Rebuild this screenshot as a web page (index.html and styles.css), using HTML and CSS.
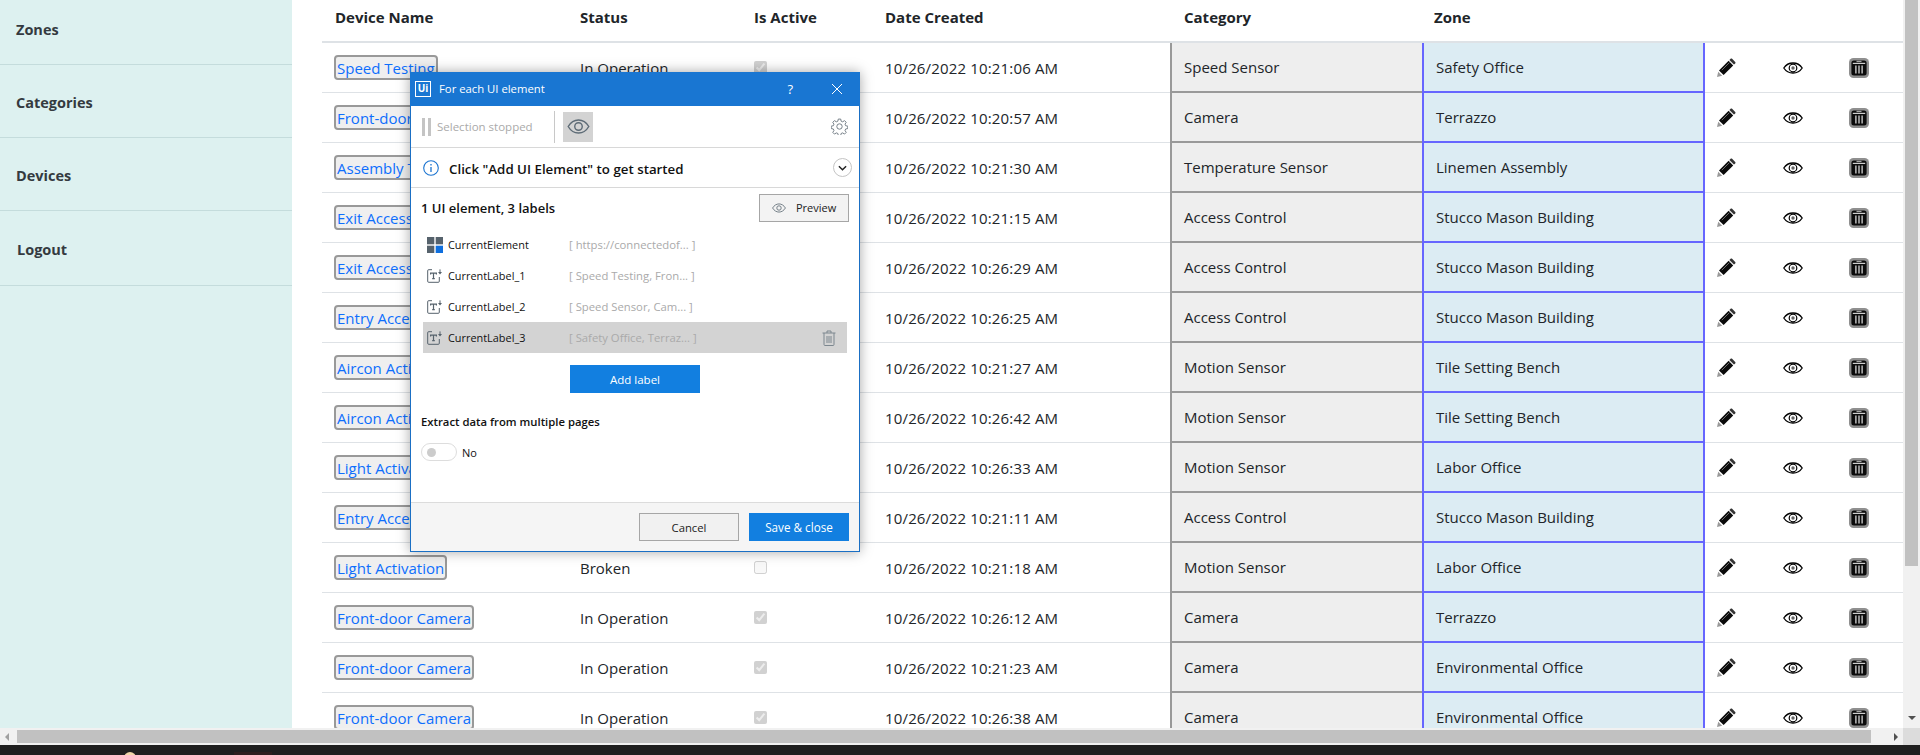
FILE: index.html
```html
<!DOCTYPE html>
<html lang="en">

<head>
    <meta charset="UTF-8">
    <title>Devices</title>
    <link rel="stylesheet" href="styles.css">
</head>

<body>
    <svg class="sprites" width="0" height="0">
        <symbol id="pencil" viewBox="0 0 20 20">
            <path d="M1 19l1.200-5.200 4 4z" fill="#9a9a9a"/>
            <path d="M3 12.400L12.600 2.800l4.600 4.600L7.600 17z" fill="#0a0a0a"/>
            <path d="M5.800 12.200l7.600-7.600" stroke="#8a8a8a" stroke-width=".8"/>
            <path d="M13.400 2l1.200-1.200c.5-.5 1-.5 1.500 0l3.100 3.100c.5.500.5 1 0 1.500L18 6.600z" fill="#333"/>
            <path d="M13.600 2.800l3.600 3.600" stroke="#ccc" stroke-width=".7"/>
        </symbol>
        <symbol id="eye" viewBox="0 0 20 12">
            <path d="M.8 6C3 2.600 6.400 1 10 1s7 1.600 9.200 5C17 9.400 13.600 11 10 11S3 9.400.8 6z" fill="none" stroke="#000" stroke-width="1.300"/>
            <circle cx="10" cy="6" r="3.800" fill="none" stroke="#000" stroke-width="1.200"/>
            <circle cx="10" cy="6" r="1.700" fill="#666"/>
        </symbol>
        <symbol id="trash" viewBox="0 0 20 20">
            <rect width="20" height="20" rx="4.500" fill="#8f8f8f"/>
            <rect x="2.400" y="2.400" width="15.200" height="15.200" rx="2.500" fill="#0c0c0c"/>
            <rect x="7.500" y="2.800" width="5" height="1.300" fill="#a8a8a8"/>
            <rect x="3.800" y="4.800" width="12.400" height="1.200" fill="#cfcfcf"/>
            <path d="M6.900 7.500v8M10 7.500v8M13.100 7.500v8" stroke="#e6e6e6" stroke-width="1.200"/>
        </symbol>
        <symbol id="label-icon" viewBox="0 0 16 14">
            <path d="M5 .7H1.800A1 1 0 0 0 .7 1.800v10.400a1 1 0 0 0 1.100 1.100h9.400a1 1 0 0 0 1.100-1.100V8" fill="none" stroke="#56626c" stroke-width="1"/>
            <path d="M3.600 5.600V4.200h5.800v1.400M6.500 4.200v5.400M5.200 9.600h2.600" fill="none" stroke="#56626c" stroke-width="1.200"/>
            <path d="M13 .4v4" stroke="#56626c" stroke-width="1"/>
            <path d="M11 3l2 2.400L15 3z" fill="#56626c"/>
        </symbol>
    </svg>

    <div class="screen">
        <aside class="sidebar">
            <nav class="side-nav">
                <a class="side-item">Zones</a>
                <a class="side-item">Categories</a>
                <a class="side-item">Devices</a>
                <a class="side-item side-logout">Logout</a>
            </nav>
        </aside>

        <main class="content">
            <table class="device-table">
                <colgroup>
                    <col class="c-name">
                    <col class="c-status">
                    <col class="c-active">
                    <col class="c-date">
                    <col class="c-cat">
                    <col class="c-zone">
                    <col class="c-act">
                    <col class="c-act">
                    <col class="c-act-last">
                </colgroup>
                <thead>
                    <tr>
                        <th>Device Name</th>
                        <th>Status</th>
                        <th>Is Active</th>
                        <th>Date Created</th>
                        <th>Category</th>
                        <th>Zone</th>
                        <th></th>
                        <th></th>
                        <th></th>
                    </tr>
                </thead>
                <tbody>
                    <tr>
                        <td><a class="device-btn">Speed Testing</a></td>
                        <td>In Operation</td>
                        <td><input type="checkbox" checked disabled></td>
                        <td class="date">10/26/2022 10:21:06 AM</td>
                        <td class="cat">Speed Sensor</td>
                        <td class="zone">Safety Office</td>
                        <td class="act"><svg class="i-pencil"><use href="#pencil"/></svg></td>
                        <td class="act"><svg class="i-eye"><use href="#eye"/></svg></td>
                        <td class="act"><svg class="i-trash"><use href="#trash"/></svg></td>
                    </tr>
                    <tr>
                        <td><a class="device-btn">Front-door Camera</a></td>
                        <td>In Operation</td>
                        <td><input type="checkbox" checked disabled></td>
                        <td class="date">10/26/2022 10:20:57 AM</td>
                        <td class="cat">Camera</td>
                        <td class="zone">Terrazzo</td>
                        <td class="act"><svg class="i-pencil"><use href="#pencil"/></svg></td>
                        <td class="act"><svg class="i-eye"><use href="#eye"/></svg></td>
                        <td class="act"><svg class="i-trash"><use href="#trash"/></svg></td>
                    </tr>
                    <tr>
                        <td><a class="device-btn">Assembly Testing</a></td>
                        <td>In Operation</td>
                        <td><input type="checkbox" checked disabled></td>
                        <td class="date">10/26/2022 10:21:30 AM</td>
                        <td class="cat">Temperature Sensor</td>
                        <td class="zone">Linemen Assembly</td>
                        <td class="act"><svg class="i-pencil"><use href="#pencil"/></svg></td>
                        <td class="act"><svg class="i-eye"><use href="#eye"/></svg></td>
                        <td class="act"><svg class="i-trash"><use href="#trash"/></svg></td>
                    </tr>
                    <tr>
                        <td><a class="device-btn">Exit Access</a></td>
                        <td>In Operation</td>
                        <td><input type="checkbox" checked disabled></td>
                        <td class="date">10/26/2022 10:21:15 AM</td>
                        <td class="cat">Access Control</td>
                        <td class="zone">Stucco Mason Building</td>
                        <td class="act"><svg class="i-pencil"><use href="#pencil"/></svg></td>
                        <td class="act"><svg class="i-eye"><use href="#eye"/></svg></td>
                        <td class="act"><svg class="i-trash"><use href="#trash"/></svg></td>
                    </tr>
                    <tr>
                        <td><a class="device-btn">Exit Access</a></td>
                        <td>In Operation</td>
                        <td><input type="checkbox" checked disabled></td>
                        <td class="date">10/26/2022 10:26:29 AM</td>
                        <td class="cat">Access Control</td>
                        <td class="zone">Stucco Mason Building</td>
                        <td class="act"><svg class="i-pencil"><use href="#pencil"/></svg></td>
                        <td class="act"><svg class="i-eye"><use href="#eye"/></svg></td>
                        <td class="act"><svg class="i-trash"><use href="#trash"/></svg></td>
                    </tr>
                    <tr>
                        <td><a class="device-btn">Entry Access</a></td>
                        <td>In Operation</td>
                        <td><input type="checkbox" checked disabled></td>
                        <td class="date">10/26/2022 10:26:25 AM</td>
                        <td class="cat">Access Control</td>
                        <td class="zone">Stucco Mason Building</td>
                        <td class="act"><svg class="i-pencil"><use href="#pencil"/></svg></td>
                        <td class="act"><svg class="i-eye"><use href="#eye"/></svg></td>
                        <td class="act"><svg class="i-trash"><use href="#trash"/></svg></td>
                    </tr>
                    <tr>
                        <td><a class="device-btn">Aircon Activation</a></td>
                        <td>In Operation</td>
                        <td><input type="checkbox" checked disabled></td>
                        <td class="date">10/26/2022 10:21:27 AM</td>
                        <td class="cat">Motion Sensor</td>
                        <td class="zone">Tile Setting Bench</td>
                        <td class="act"><svg class="i-pencil"><use href="#pencil"/></svg></td>
                        <td class="act"><svg class="i-eye"><use href="#eye"/></svg></td>
                        <td class="act"><svg class="i-trash"><use href="#trash"/></svg></td>
                    </tr>
                    <tr>
                        <td><a class="device-btn">Aircon Activation</a></td>
                        <td>In Operation</td>
                        <td><input type="checkbox" checked disabled></td>
                        <td class="date">10/26/2022 10:26:42 AM</td>
                        <td class="cat">Motion Sensor</td>
                        <td class="zone">Tile Setting Bench</td>
                        <td class="act"><svg class="i-pencil"><use href="#pencil"/></svg></td>
                        <td class="act"><svg class="i-eye"><use href="#eye"/></svg></td>
                        <td class="act"><svg class="i-trash"><use href="#trash"/></svg></td>
                    </tr>
                    <tr>
                        <td><a class="device-btn">Light Activation</a></td>
                        <td>In Operation</td>
                        <td><input type="checkbox" checked disabled></td>
                        <td class="date">10/26/2022 10:26:33 AM</td>
                        <td class="cat">Motion Sensor</td>
                        <td class="zone">Labor Office</td>
                        <td class="act"><svg class="i-pencil"><use href="#pencil"/></svg></td>
                        <td class="act"><svg class="i-eye"><use href="#eye"/></svg></td>
                        <td class="act"><svg class="i-trash"><use href="#trash"/></svg></td>
                    </tr>
                    <tr>
                        <td><a class="device-btn">Entry Access</a></td>
                        <td>In Operation</td>
                        <td><input type="checkbox" checked disabled></td>
                        <td class="date">10/26/2022 10:21:11 AM</td>
                        <td class="cat">Access Control</td>
                        <td class="zone">Stucco Mason Building</td>
                        <td class="act"><svg class="i-pencil"><use href="#pencil"/></svg></td>
                        <td class="act"><svg class="i-eye"><use href="#eye"/></svg></td>
                        <td class="act"><svg class="i-trash"><use href="#trash"/></svg></td>
                    </tr>
                    <tr>
                        <td><a class="device-btn">Light Activation</a></td>
                        <td>Broken</td>
                        <td><input type="checkbox" disabled></td>
                        <td class="date">10/26/2022 10:21:18 AM</td>
                        <td class="cat">Motion Sensor</td>
                        <td class="zone">Labor Office</td>
                        <td class="act"><svg class="i-pencil"><use href="#pencil"/></svg></td>
                        <td class="act"><svg class="i-eye"><use href="#eye"/></svg></td>
                        <td class="act"><svg class="i-trash"><use href="#trash"/></svg></td>
                    </tr>
                    <tr>
                        <td><a class="device-btn">Front-door Camera</a></td>
                        <td>In Operation</td>
                        <td><input type="checkbox" checked disabled></td>
                        <td class="date">10/26/2022 10:26:12 AM</td>
                        <td class="cat">Camera</td>
                        <td class="zone">Terrazzo</td>
                        <td class="act"><svg class="i-pencil"><use href="#pencil"/></svg></td>
                        <td class="act"><svg class="i-eye"><use href="#eye"/></svg></td>
                        <td class="act"><svg class="i-trash"><use href="#trash"/></svg></td>
                    </tr>
                    <tr>
                        <td><a class="device-btn">Front-door Camera</a></td>
                        <td>In Operation</td>
                        <td><input type="checkbox" checked disabled></td>
                        <td class="date">10/26/2022 10:21:23 AM</td>
                        <td class="cat">Camera</td>
                        <td class="zone">Environmental Office</td>
                        <td class="act"><svg class="i-pencil"><use href="#pencil"/></svg></td>
                        <td class="act"><svg class="i-eye"><use href="#eye"/></svg></td>
                        <td class="act"><svg class="i-trash"><use href="#trash"/></svg></td>
                    </tr>
                    <tr>
                        <td><a class="device-btn">Front-door Camera</a></td>
                        <td>In Operation</td>
                        <td><input type="checkbox" checked disabled></td>
                        <td class="date">10/26/2022 10:26:38 AM</td>
                        <td class="cat">Camera</td>
                        <td class="zone">Environmental Office</td>
                        <td class="act"><svg class="i-pencil"><use href="#pencil"/></svg></td>
                        <td class="act"><svg class="i-eye"><use href="#eye"/></svg></td>
                        <td class="act"><svg class="i-trash"><use href="#trash"/></svg></td>
                    </tr>
                </tbody>
            </table>
        </main>

        <div class="v-scroll">
            <div class="v-thumb"></div>
            <div class="arrow-down"></div>
        </div>
    </div>

    <div class="h-scroll">
        <div class="h-end"><span class="arrow-left"></span></div>
        <div class="h-thumb"></div>
        <div class="h-end h-end-right"><span class="arrow-right"></span></div>
        <div class="h-corner"></div>
    </div>

    <div class="taskbar">
        <span class="task-avatar"></span>
        <span class="task-app"></span>
    </div>

    <!-- UiPath dialog over the page -->
    <section class="dialog">
        <header class="dlg-title">
            <span class="dlg-logo">Ui</span>
            <span class="dlg-title-text">For each UI element</span>
            <span class="dlg-help">?</span>
            <svg class="dlg-close" viewBox="0 0 12 12"><path d="M1 1l10 10M11 1L1 11" stroke="#fff" stroke-width="1"/></svg>
        </header>

        <div class="dlg-toolbar">
            <span class="pause-bars"></span>
            <span class="sel-text">Selection stopped</span>
            <span class="tool-sep"></span>
            <span class="eye-toggle">
                <svg viewBox="0 0 24 16" width="23" height="15"><path d="M1 8c2.600-4.400 6.600-7 11-7s8.400 2.600 11 7c-2.600 4.400-6.600 7-11 7S3.600 12.400 1 8z" fill="none" stroke="#5d6b76" stroke-width="1.500"/><circle cx="12" cy="8" r="4" fill="none" stroke="#5d6b76" stroke-width="1.500"/></svg>
            </span>
            <svg class="gear" viewBox="0 0 24 24" width="17" height="17"><path d="M10.300 1.500h3.400l.6 3 2.200.9 2.600-1.700 2.400 2.400-1.700 2.600.9 2.200 3 .6v3.400l-3 .6-.9 2.200 1.700 2.600-2.400 2.400-2.600-1.700-2.200.9-.6 3h-3.400l-.6-3-2.200-.9-2.600 1.700-2.400-2.400 1.700-2.600-.9-2.200-3-.6v-3.400l3-.6.9-2.200L2.500 6.100l2.400-2.400 2.600 1.700 2.200-.9z" fill="none" stroke="#6c7780" stroke-width="1.300"/><circle cx="12" cy="12" r="3.800" fill="none" stroke="#6c7780" stroke-width="1.300"/></svg>
        </div>

        <div class="dlg-info">
            <svg viewBox="0 0 16 16" width="16" height="16"><circle cx="8" cy="8" r="7.300" fill="none" stroke="#1a73d0" stroke-width="1.100"/><path d="M8 7v5M8 4v1.500" stroke="#1a73d0" stroke-width="1.300"/></svg>
            <span class="info-text">Click "Add UI Element" to get started</span>
            <span class="chev-circle">
                <svg viewBox="0 0 10 6" width="9" height="6"><path d="M1 1l4 4 4-4" fill="none" stroke="#222" stroke-width="1.600"/></svg>
            </span>
        </div>

        <div class="dlg-body">
            <div class="count-row">
                <span class="count-text">1 UI element, 3 labels</span>
                <button class="btn-preview">
                    <svg viewBox="0 0 24 16" width="14" height="10"><path d="M1 8c2.600-4.400 6.600-7 11-7s8.400 2.600 11 7c-2.600 4.400-6.600 7-11 7S3.600 12.400 1 8z" fill="none" stroke="#6c7780" stroke-width="1.600"/><circle cx="12" cy="8" r="3.800" fill="none" stroke="#6c7780" stroke-width="1.600"/></svg>
                    Preview
                </button>
            </div>

            <ul class="var-list">
                <li class="var-row">
                    <svg class="var-icon" viewBox="0 0 16 16"><rect width="7.300" height="7.300" fill="#56626c"/><rect x="8.700" width="7.300" height="7.300" fill="#56626c"/><rect y="8.700" width="7.300" height="7.300" fill="#56626c"/><rect x="8.700" y="8.700" width="7.300" height="7.300" fill="#0f6fde"/></svg>
                    <span class="var-name">CurrentElement</span>
                    <span class="var-val">[ https://connectedof... ]</span>
                </li>
                <li class="var-row">
                    <svg class="var-icon"><use href="#label-icon"/></svg>
                    <span class="var-name">CurrentLabel_1</span>
                    <span class="var-val">[ Speed Testing, Fron... ]</span>
                </li>
                <li class="var-row">
                    <svg class="var-icon"><use href="#label-icon"/></svg>
                    <span class="var-name">CurrentLabel_2</span>
                    <span class="var-val">[ Speed Sensor, Cam... ]</span>
                </li>
                <li class="var-row var-selected">
                    <svg class="var-icon"><use href="#label-icon"/></svg>
                    <span class="var-name">CurrentLabel_3</span>
                    <span class="var-val">[ Safety Office, Terraz... ]</span>
                    <svg class="var-del" viewBox="0 0 14 16" width="14" height="16"><path d="M.5 3h13M5 3V1h4v2M2 3v11.500a1 1 0 0 0 1 1h8a1 1 0 0 0 1-1V3M5 6v7M7 6v7M9 6v7" fill="none" stroke="#7c878f" stroke-width="1"/></svg>
                </li>
            </ul>

            <button class="btn-add">Add label</button>

            <div class="extract-title">Extract data from multiple pages</div>
            <div class="toggle-row">
                <span class="toggle"><span class="toggle-dot"></span></span>
                <span>No</span>
            </div>
        </div>

        <footer class="dlg-footer">
            <button class="btn-cancel">Cancel</button>
            <button class="btn-save">Save &amp; close</button>
        </footer>
    </section>
</body>

</html>
```
FILE: styles.css
```css
* {
    box-sizing: border-box;
}

html, body {
    margin: 0;
    height: 755px;
    overflow: hidden;
}

body {
    font-family: "Open Sans", "Noto Sans", Arial, sans-serif;
    color: #212529;
    background: #fff;
    position: relative;
}

.sprites {
    position: absolute;
}

.screen {
    display: flex;
    height: 728px;
    overflow: hidden;
}

/* sidebar */
.sidebar {
    width: 292px;
    flex: none;
    background: #ddf1f0;
    overflow: hidden;
}

.side-nav {
    margin-top: -8px;
}

.side-item {
    display: flex;
    align-items: center;
    height: 73px;
    padding: 3px 0 0 16px;
    border-bottom: 1px solid #c4dcdc;
    font-size: 14.5px;
    font-weight: 700;
    color: #343a40;
}

.side-logout {
    height: 75px;
    padding-left: 17px;
}

/* table */
.content {
    flex: 1;
    padding-left: 30px;
    overflow: hidden;
}

.device-table {
    width: 1581px;
    table-layout: fixed;
    border-collapse: separate;
    border-spacing: 0;
    font-size: 15px;
}

.c-name { width: 245px; }
.c-status { width: 174px; }
.c-active { width: 131px; }
.c-date { width: 298px; }
.c-cat { width: 252px; }
.c-zone { width: 283px; }
.c-act { width: 66px; }
.c-act-last { width: 66px; }

.device-table th {
    height: 43px;
    padding: 0 0 7px 13px;
    text-align: left;
    font-weight: 700;
    border-bottom: 2px solid #dee2e6;
}

.device-table th:nth-child(5) {
    padding-left: 14px;
}

.device-table th:nth-child(6) {
    padding-left: 12px;
}

.device-table td {
    height: 50px;
    padding: 0 0 0 13px;
    border-bottom: 1px solid #dee2e6;
    vertical-align: middle;
}

.device-table td input {
    display: block;
    margin: 0;
}

.device-table td.date {
    letter-spacing: 0.16px;
}

.device-btn {
    display: inline-block;
    height: 25px;
    padding: 0 1px;
    margin: 0 0 1px -1px;
    vertical-align: middle;
    line-height: 22px;
    border: 2px solid #999;
    border-radius: 4px;
    background: #efefef;
    color: #0d6efd;
    white-space: nowrap;
}

.device-table td.cat {
    background: #eee;
    border-left: 2px solid #999;
    border-bottom: 2px solid #999;
    padding-left: 12px;
}

.device-table td.zone {
    background: #dcecf3;
    border-left: 2px solid #66f;
    border-right: 2px solid #66f;
    border-bottom: 2px solid #66f;
    padding-left: 12px;
}

.device-table td.act {
    padding-left: 12px;
}

.device-table td.act:nth-child(7) {
    padding-left: 11px;
}

.act svg {
    display: block;
}

.i-pencil {
    width: 20px;
    height: 20px;
}

.i-eye {
    width: 20px;
    height: 12px;
}

.i-trash {
    width: 20px;
    height: 20px;
}

/* fake scrollbars */
.v-scroll {
    width: 17px;
    flex: none;
    background: #f1f1f1;
    position: relative;
}

.v-thumb {
    width: 13px;
    height: 566px;
    margin-left: 2px;
    background: #c1c1c1;
}

.arrow-down {
    position: absolute;
    left: 5px;
    bottom: 8px;
    border-left: 4px solid transparent;
    border-right: 4px solid transparent;
    border-top: 4px solid #505050;
}

.h-scroll {
    display: flex;
    height: 17px;
    background: #f1f1f1;
}

.h-end {
    width: 17px;
    flex: none;
    display: flex;
    align-items: center;
    padding-left: 5px;
}

.h-end-right {
    width: 32px;
    padding-left: 23px;
}

.arrow-left {
    border-top: 4px solid transparent;
    border-bottom: 4px solid transparent;
    border-right: 4px solid #a0a0a0;
}

.arrow-right {
    border-top: 4px solid transparent;
    border-bottom: 4px solid transparent;
    border-left: 4px solid #505050;
}

.h-thumb {
    flex: 1;
    height: 13px;
    margin-top: 2px;
    background: #c1c1c1;
}

.h-corner {
    width: 17px;
    flex: none;
    background: #dcdcdc;
}

.taskbar {
    display: flex;
    height: 10px;
    gap: 98px;
    padding-left: 124px;
    background: #1f1f1f;
    overflow: hidden;
}

.task-avatar {
    width: 12px;
    height: 12px;
    margin-top: 7px;
    border-radius: 50%;
    background: #f0d6a8;
}

.task-app {
    width: 38px;
    height: 8px;
    margin-top: 7px;
    background: #2e1f1f;
}

/* dialog */
.dialog {
    position: absolute;
    left: 410px;
    top: 72px;
    width: 450px;
    height: 480px;
    display: flex;
    flex-direction: column;
    background: #fff;
    border: 1px solid #1a6fc4;
    box-shadow: 0 0 12px rgba(0, 0, 0, 0.35);
    font-size: 11px;
    color: #111;
}

.dlg-title {
    display: flex;
    align-items: center;
    height: 34px;
    flex: none;
    margin: -1px -1px 0;
    padding: 0 17px 0 5px;
    background: #1976d2;
    color: #fff;
}

.dlg-logo {
    width: 16px;
    height: 16px;
    border: 1.5px solid #fff;
    font-size: 10px;
    font-weight: 700;
    line-height: 13px;
    text-align: center;
    flex: none;
}

.dlg-title-text {
    margin-left: 8px;
    flex: 1;
    font-size: 11.3px;
    margin-top: -1px;
}

.dlg-help {
    font-size: 13px;
    margin-right: 38px;
}

.dlg-close {
    width: 12px;
    height: 12px;
}

.dlg-toolbar {
    display: flex;
    align-items: center;
    height: 42px;
    flex: none;
    padding: 0 11px;
    border-bottom: 1px solid #d8d8d8;
}

.pause-bars {
    width: 9px;
    height: 18px;
    border-left: 3px solid #c4c4c4;
    border-right: 3px solid #c4c4c4;
}

.sel-text {
    margin-left: 6px;
    width: 117px;
    color: #aaa;
    font-size: 11.5px;
}

.tool-sep {
    width: 1px;
    height: 32px;
    background: #c8c8c8;
}

.eye-toggle {
    display: flex;
    align-items: center;
    justify-content: center;
    width: 30px;
    height: 30px;
    margin-left: 8px;
    background: #d3d3d3;
}

.gear {
    margin-left: auto;
}

.dlg-info {
    display: flex;
    align-items: center;
    height: 40px;
    flex: none;
    padding: 0 7px 0 12px;
    border-bottom: 1px solid #d8d8d8;
}

.info-text {
    flex: 1;
    margin: 2px 0 0 10px;
    font-size: 13.3px;
    font-weight: 600;
}

.chev-circle {
    display: flex;
    align-items: center;
    justify-content: center;
    width: 19px;
    height: 19px;
    border: 1px solid #c4c4c4;
    border-radius: 50%;
}

.dlg-body {
    flex: 1;
    padding: 0 10px 0 10px;
}

.count-row {
    display: flex;
    align-items: center;
    justify-content: space-between;
    height: 41px;
    padding-bottom: 2px;
}

.count-text {
    font-size: 13px;
    font-weight: 600;
}

.btn-preview {
    display: flex;
    align-items: center;
    gap: 10px;
    width: 90px;
    height: 28px;
    padding: 0 0 0 12px;
    border: 1px solid #a6a6a6;
    background: #f3f3f3;
    font: inherit;
    color: #222;
}

.var-list {
    list-style: none;
    margin: 0;
    padding: 0;
}

.var-row {
    display: flex;
    align-items: center;
    height: 31px;
    margin-left: 2px;
    margin-right: 2px;
    padding-left: 4px;
}

.var-icon {
    width: 16px;
    height: 16px;
    flex: none;
}

.var-name {
    width: 121px;
    margin-left: 5px;
    font-size: 10.9px;
}

.var-val {
    color: #aaa;
    font-size: 11.3px;
}

.var-selected {
    background: #d3d3d3;
    position: relative;
}

.var-del {
    margin-left: auto;
    margin-right: 11px;
}

.btn-add {
    display: block;
    width: 130px;
    height: 28px;
    margin: 12px 0 0 149px;
    border: none;
    background: #127fe0;
    color: #fff;
    font: inherit;
    font-size: 11.5px;
}

.extract-title {
    margin-top: 21px;
    font-size: 11.3px;
    font-weight: 600;
}

.toggle-row {
    display: flex;
    align-items: center;
    gap: 5px;
    margin-top: 14px;
}

.toggle {
    display: flex;
    align-items: center;
    width: 36px;
    height: 18px;
    padding-left: 5px;
    border: 1px solid #ddd;
    border-radius: 9px;
}

.toggle-dot {
    width: 9px;
    height: 9px;
    border-radius: 50%;
    background: #ccc;
}

.dlg-footer {
    display: flex;
    justify-content: flex-end;
    gap: 10px;
    height: 49px;
    flex: none;
    padding: 10px 10px 0 0;
    background: #f5f5f5;
    border-top: 1px solid #dcdcdc;
}

.btn-cancel,
.btn-save {
    width: 100px;
    height: 28px;
    font: inherit;
    font-size: 11.3px;
}

.btn-cancel {
    border: 1px solid #a6a6a6;
    background: #f1f1f1;
    color: #222;
}

.btn-save {
    border: none;
    background: #127fe0;
    color: #fff;
    font-size: 11.7px;
}
```
